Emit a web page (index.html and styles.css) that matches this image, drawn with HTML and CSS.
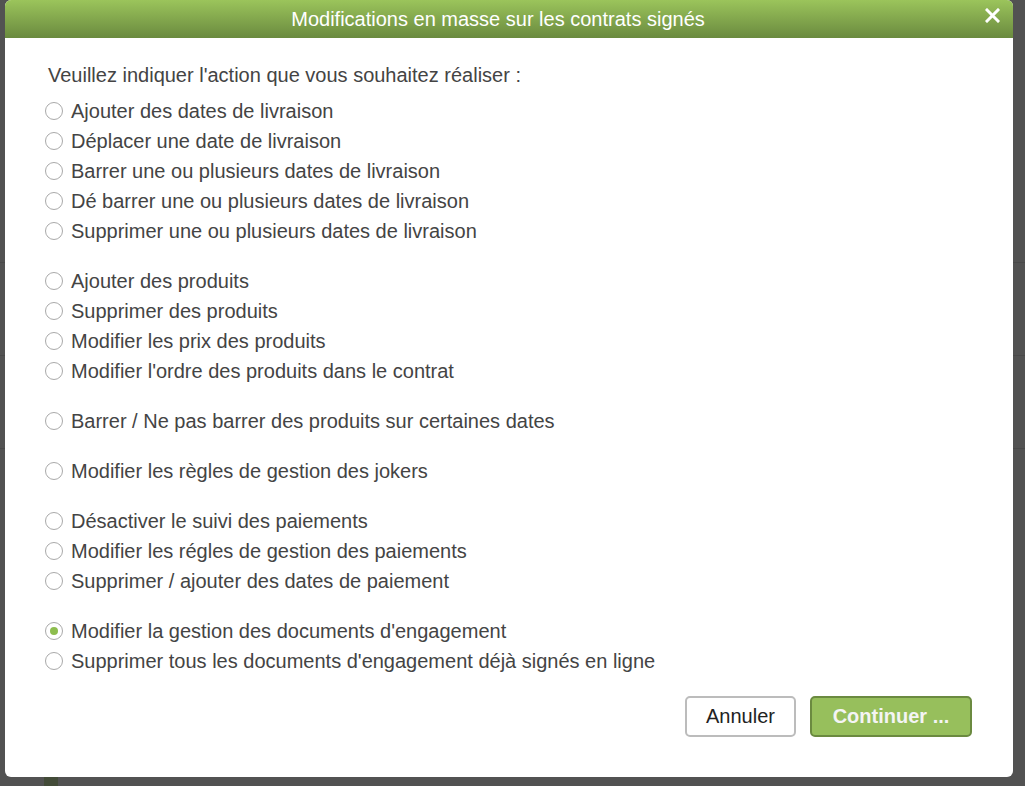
FILE: index.html
```html
<html>
<head>
    <meta charset="utf-8">
    <title>Modifications en masse</title>
    <link rel="stylesheet" href="styles.css">
</head>
<body>
    <div class="fond">
        <div class="ligne l1"></div>
        <div class="ligne l2"></div>
        <div class="ligne l3"></div>
        <div class="pied"></div>
    </div>
    <div class="dialogue">
        <div class="entete">
            Modifications en masse sur les contrats signés
            <svg class="fermer" width="15" height="15" viewBox="0 0 15 15">
                <path d="M2 2 L13 13 M13 2 L2 13" stroke="#fff" stroke-width="3" stroke-linecap="square"/>
            </svg>
        </div>
        <form class="contenu">
            <p class="intro">Veuillez indiquer l'action que vous souhaitez réaliser :</p>

            <div class="groupe">
                <label><input type="radio" name="action"> Ajouter des dates de livraison</label>
                <label><input type="radio" name="action"> Déplacer une date de livraison</label>
                <label><input type="radio" name="action"> Barrer une ou plusieurs dates de livraison</label>
                <label><input type="radio" name="action"> Dé barrer une ou plusieurs dates de livraison</label>
                <label><input type="radio" name="action"> Supprimer une ou plusieurs dates de livraison</label>
            </div>

            <div class="groupe">
                <label><input type="radio" name="action"> Ajouter des produits</label>
                <label><input type="radio" name="action"> Supprimer des produits</label>
                <label><input type="radio" name="action"> Modifier les prix des produits</label>
                <label><input type="radio" name="action"> Modifier l'ordre des produits dans le contrat</label>
            </div>

            <div class="groupe">
                <label><input type="radio" name="action"> Barrer / Ne pas barrer des produits sur certaines dates</label>
            </div>

            <div class="groupe">
                <label><input type="radio" name="action"> Modifier les règles de gestion des jokers</label>
            </div>

            <div class="groupe">
                <label><input type="radio" name="action"> Désactiver le suivi des paiements</label>
                <label><input type="radio" name="action"> Modifier les régles de gestion des paiements</label>
                <label><input type="radio" name="action"> Supprimer / ajouter des dates de paiement</label>
            </div>

            <div class="groupe">
                <label><input type="radio" name="action" checked> Modifier la gestion des documents d'engagement</label>
                <label><input type="radio" name="action"> Supprimer tous les documents d'engagement déjà signés en ligne</label>
            </div>

            <div class="boutons">
                <button type="button" class="annuler">Annuler</button>
                <button type="button" class="continuer">Continuer ...</button>
            </div>
        </form>
    </div>
</body>
</html>
```

FILE: styles.css
```css
body {
    margin: 0;
    background-color: #525252;
    font-family: "Liberation Sans", Arial, sans-serif;
    color: #444;
    height: 786px;
    overflow: hidden;
    position: relative;
}

/* page grisée derrière la fenêtre */
.fond .ligne {
    position: absolute;
    left: 0;
    right: 0;
    height: 1px;
    background-color: #494949;
}

.l1 { top: 262px; }
.l2 { top: 355px; }
.l3 { top: 448px; }

.fond .pied {
    position: absolute;
    left: 44px;
    top: 777px;
    width: 14px;
    height: 9px;
    background-color: #434b38;
}

.dialogue {
    position: relative;
    margin-left: 5px;
    width: 1008px;
    height: 777px;
    background-color: #fff;
    border-radius: 6px;
    overflow: hidden;
}

.entete {
    position: relative;
    height: 38px;
    line-height: 38px;
    padding-right: 22px;
    text-align: center;
    color: #fff;
    font-size: 20px;
    background: linear-gradient(to bottom, #9bc45b, #6a8a3f);
}

.fermer {
    position: absolute;
    right: 13px;
    top: 8px;
}

.contenu {
    padding: 22px 41px 0 40px;
    margin: 0;
}

.intro {
    margin: 0 0 6px 3px;
    line-height: 30px;
    font-size: 20px;
}

.groupe {
    display: flex;
    flex-direction: column;
    margin-bottom: 20px;
}

.groupe label {
    display: flex;
    align-items: center;
    height: 30px;
    font-size: 20px;
}

.groupe input[type="radio"] {
    appearance: none;
    -webkit-appearance: none;
    flex: none;
    width: 18px;
    height: 18px;
    margin: 0 8px 0 0;
    border: 1px solid #a9a9a9;
    border-radius: 50%;
    box-sizing: border-box;
    background-color: #fff;
    display: flex;
    align-items: center;
    justify-content: center;
}

.groupe input[type="radio"]:checked::after {
    content: "";
    width: 8px;
    height: 8px;
    border-radius: 50%;
    background-color: #8dbd4e;
}

.boutons {
    display: flex;
    justify-content: flex-end;
    gap: 14px;
    margin-top: 1px;
}

.boutons button {
    height: 41px;
    font-family: "Liberation Sans", Arial, sans-serif;
    font-size: 20px;
    border-radius: 5px;
    cursor: pointer;
}

.annuler {
    width: 111px;
    background-color: #fff;
    border: 2px solid #bcbcbc;
    color: #222;
}

.continuer {
    width: 162px;
    background-color: #97bf5c;
    border: 2px solid #6b8a40;
    color: #f4f4f4;
    font-weight: bold;
}
```
